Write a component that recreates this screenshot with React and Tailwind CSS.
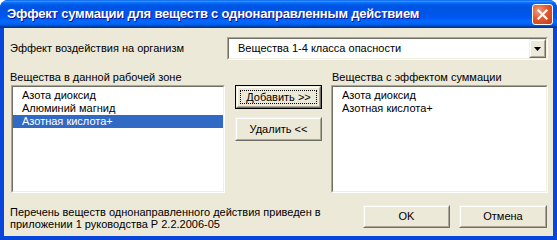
import { useState } from 'react';

const FONT = "font-['Liberation_Sans',Arial,sans-serif]";

const Sunken = ({ className = '', children }) => (
  <div className={`border border-t-[#aca899] border-l-[#aca899] border-b-white border-r-white ${className}`}>
    <div className="h-full border border-t-[#716f64] border-l-[#716f64] border-b-[#f1efe2] border-r-[#f1efe2] bg-white">
      {children}
    </div>
  </div>
);

const Button = ({ label, focused, className = '' }) => (
  <div className={`${focused ? 'border border-black' : ''} ${className}`}>
    <div className="h-full border border-t-[#f1efe2] border-l-[#f1efe2] border-b-[#716f64] border-r-[#716f64] bg-[#ece9d8]">
      <div className="h-full border border-t-white border-l-white border-b-[#aca899] border-r-[#aca899] flex items-center justify-center p-[2px]">
        <div className={`w-full h-full flex items-center justify-center ${focused ? 'border border-dotted border-black' : ''}`}>
          {label}
        </div>
      </div>
    </div>
  </div>
);

const ListItem = ({ text, selected }) => (
  <div className={`h-[13px] leading-[13px] pl-[9px] whitespace-nowrap ${selected ? 'bg-[#316ac5] text-white' : 'text-black'}`}>
    {text}
  </div>
);

export default function App() {
  const [available] = useState(['Азота диоксид', 'Алюминий магнид', 'Азотная кислота+']);
  const [chosen] = useState(['Азота диоксид', 'Азотная кислота+']);

  return (
    <div className={`w-[557px] h-[240px] flex flex-col bg-[#0846db] rounded-t-[8px] overflow-hidden ${FONT} text-[11px] text-black`}>
      {/* Title bar */}
      <div className="h-[28px] shrink-0 flex items-center justify-between pl-[7px] pr-[4px] bg-[linear-gradient(to_bottom,#0058ee_0%,#3593ff_4%,#288eff_6%,#127dff_8%,#036ffc_10%,#0262ee_14%,#0057e5_20%,#0054e3_24%,#0055eb_56%,#005bf5_66%,#026afe_76%,#0062ef_86%,#0052d6_92%,#0040ab_94%,#003092_100%)]">
        <span className="text-white font-bold text-[13px] tracking-[-0.2px] [text-shadow:1px_1px_#0f1089]">
          Эффект суммации для веществ с однонаправленным действием
        </span>
        <div className="w-[21px] h-[21px] rounded-[3px] border border-white bg-[radial-gradient(circle_at_30%_30%,#f29a7c_0%,#e2582f_45%,#c43a18_100%)] flex items-center justify-center">
          <svg width="11" height="11" viewBox="0 0 11 11">
            <path d="M1.5 1.5 L9.5 9.5 M9.5 1.5 L1.5 9.5" stroke="white" strokeWidth="2.2" strokeLinecap="square" />
          </svg>
        </div>
      </div>

      {/* Client area */}
      <div className="flex-1 mx-[4px] mb-[4px] bg-[#ece9d8] pt-[9px] pl-[6px] pr-[4px] flex flex-col">
        <div className="flex items-center h-[23px]">
          <span className="w-[217px]">Эффект воздействия на организм</span>
          <Sunken className="w-[321px] h-[23px]">
            <div className="flex h-full items-center">
              <span className="flex-1 pl-[9px]">Вещества 1-4 класса опасности</span>
              <div className="w-[17px] h-full border border-t-[#f1efe2] border-l-[#f1efe2] border-b-[#716f64] border-r-[#716f64] bg-[#ece9d8]">
                <div className="h-full border border-t-white border-l-white border-b-[#aca899] border-r-[#aca899] flex items-center justify-center">
                  <svg width="7" height="4" viewBox="0 0 7 4">
                    <path d="M0 0 H7 L3.5 4 Z" fill="black" />
                  </svg>
                </div>
              </div>
            </div>
          </Sunken>
        </div>

        <div className="flex mt-[11px] h-[13px] leading-[13px]">
          <span className="w-[322px]">Вещества в данной рабочей зоне</span>
          <span>Вещества с эффектом суммации</span>
        </div>

        <div className="flex mt-[1px] pl-[1px]">
          <Sunken className="w-[214px] h-[108px]">
            <div className="pt-[2px]">
              {available.map((s, i) => (
                <ListItem key={s} text={s} selected={i === 2} />
              ))}
            </div>
          </Sunken>
          <div className="w-[106px] flex flex-col pl-[10px] gap-[8px]">
            <Button label="Добавить >>" focused className="w-[87px] h-[24px]" />
            <Button label="Удалить <<" className="w-[87px] h-[24px]" />
          </div>
          <Sunken className="w-[217px] h-[108px]">
            <div className="pt-[2px]">
              {chosen.map((s) => (
                <ListItem key={s} text={s} />
              ))}
            </div>
          </Sunken>
        </div>

        <div className="flex items-start mt-[12px]">
          <div className="w-[353px] leading-[12px] pt-[1px]">
            Перечень веществ однонаправленного действия приведен в
            <br />
            приложении 1 руководства Р 2.2.2006-05
          </div>
          <Button label="OK" className="w-[87px] h-[23px]" />
          <Button label="Отмена" className="w-[88px] h-[23px] ml-[9px]" />
        </div>
      </div>
    </div>
  );
}
